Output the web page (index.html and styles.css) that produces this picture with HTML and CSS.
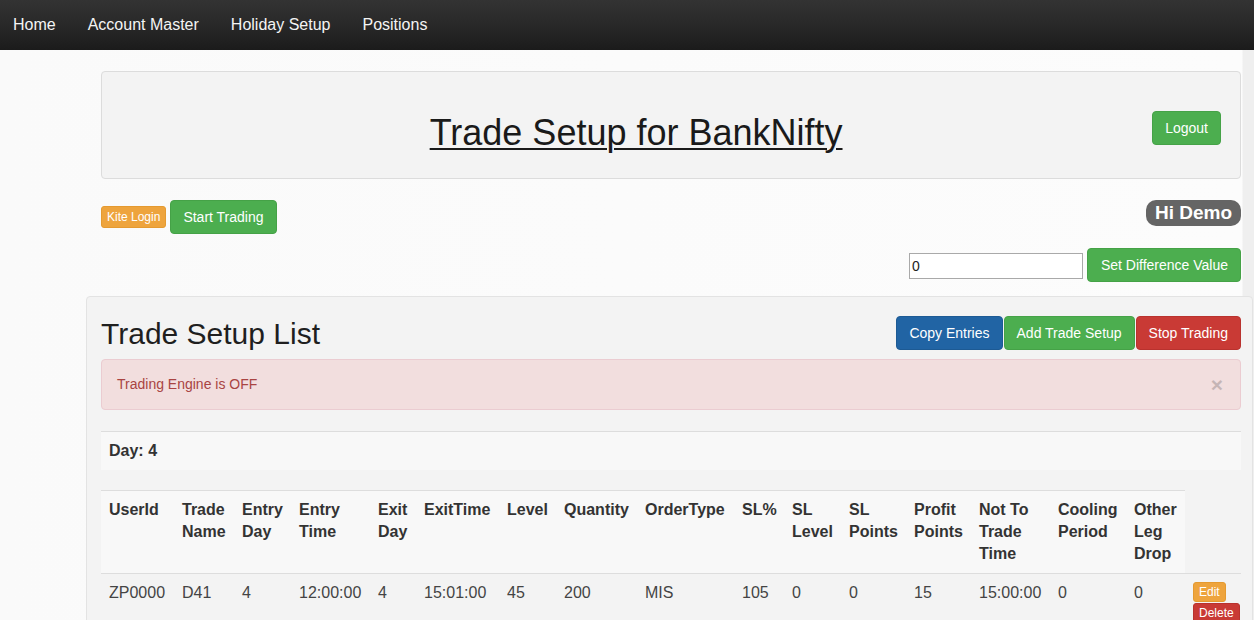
FILE: index.html
```html
<!DOCTYPE html>
<html>
<head>
<meta charset="utf-8">
<title>Trade Setup for BankNifty</title>
<link rel="stylesheet" href="styles.css">
</head>
<body>
<nav class="navbar">
  <a class="nav-link" href="#">Home</a>
  <a class="nav-link" href="#">Account Master</a>
  <a class="nav-link" href="#">Holiday Setup</a>
  <a class="nav-link" href="#">Positions</a>
</nav>
<div class="page">
  <div class="inner">
    <div class="jumbotron">
      <h1 class="title"><span class="title-text">Trade Setup for BankNifty</span></h1>
      <button class="btn btn-success logout">Logout</button>
    </div>
    <div class="toolbar">
      <div class="toolbar-left">
        <button class="btn btn-warning btn-xs">Kite Login</button>
        <button class="btn btn-success">Start Trading</button>
      </div>
      <span class="hi-badge">Hi Demo</span>
    </div>
    <div class="diff-row">
      <input class="diff-input" type="text" value="0">
      <button class="btn btn-success">Set Difference Value</button>
    </div>
  </div>
  <div class="panel">
    <div class="panel-head">
      <h2 class="panel-title">Trade Setup List</h2>
      <div class="btn-group">
        <button class="btn btn-primary">Copy Entries</button>
        <button class="btn btn-success">Add Trade Setup</button>
        <button class="btn btn-danger">Stop Trading</button>
      </div>
    </div>
    <div class="alert">
      <span>Trading Engine is OFF</span>
      <span class="close">&times;</span>
    </div>
    <table class="day-table">
      <tr><td>Day: 4</td></tr>
    </table>
    <table class="setup-table">
      <colgroup>
        <col class="c73"><col class="c60"><col class="c57"><col class="c79"><col class="c46"><col class="c83"><col class="c57"><col class="c81"><col class="c97"><col class="c50"><col class="c57"><col class="c65"><col class="c65"><col class="c79"><col class="c76"><col class="c59"><col class="c56">
      </colgroup>
      <tr class="head-row">
        <th>UserId</th>
        <th>Trade Name</th>
        <th>Entry Day</th>
        <th>Entry Time</th>
        <th>Exit Day</th>
        <th>ExitTime</th>
        <th>Level</th>
        <th>Quantity</th>
        <th>OrderType</th>
        <th>SL%</th>
        <th>SL Level</th>
        <th>SL Points</th>
        <th>Profit Points</th>
        <th>Not To Trade Time</th>
        <th>Cooling Period</th>
        <th>Other Leg Drop</th>
      </tr>
      <tr class="data-row">
        <td>ZP0000</td>
        <td>D41</td>
        <td>4</td>
        <td>12:00:00</td>
        <td>4</td>
        <td>15:01:00</td>
        <td>45</td>
        <td>200</td>
        <td>MIS</td>
        <td>105</td>
        <td>0</td>
        <td>0</td>
        <td>15</td>
        <td>15:00:00</td>
        <td>0</td>
        <td>0</td>
        <td class="actions">
          <div class="action-stack">
            <button class="btn btn-warning btn-xs btn-row">Edit</button>
            <button class="btn btn-danger btn-xs btn-row">Delete</button>
          </div>
        </td>
      </tr>
    </table>
  </div>
</div>
</body>
</html>
```

FILE: styles.css
```css
* {
  box-sizing: border-box;
}

html, body {
  margin: 0;
  padding: 0;
}

body {
  font-family: "Liberation Sans", Arial, sans-serif;
  font-size: 14px;
  line-height: 20px;
  color: #333;
  background: linear-gradient(to right, #fafafa 0, #fcfcfc 1242px, #efefef 1243px, #efefef 100%);
  overflow-x: hidden;
  min-height: 620px;
}

/* Navbar */
.navbar {
  height: 50px;
  display: flex;
  align-items: center;
  gap: 32px;
  padding-left: 13px;
  background: linear-gradient(to bottom, #333 0%, #262626 60%, #1b1b1b 100%);
}

.nav-link {
  color: #f4f4f4;
  text-decoration: none;
  font-size: 16px;
  line-height: 20px;
  margin-top: -1px;
}

/* Page */
.page {
  margin-left: 86px;
  width: 1167px;
  padding-top: 21px;
}

.inner {
  padding: 0 12px 0 15px;
}

.jumbotron {
  display: flex;
  align-items: flex-start;
  background: #f3f3f3;
  border: 1px solid #dcdcdc;
  border-radius: 4px;
  padding: 39px 19px 25px 31px;
}

.title {
  flex: 1;
  margin: 2px 0 0;
  text-align: center;
  font-size: 36px;
  line-height: 40px;
  font-weight: normal;
  color: #1a1a1a;
}

.title-text {
  text-decoration: underline;
  text-decoration-thickness: 2px;
  text-underline-offset: 3px;
}

.logout {
  margin-left: 13px;
}

/* Buttons */
.btn {
  font-family: "Liberation Sans", Arial, sans-serif;
  font-size: 14px;
  line-height: 20px;
  padding: 6px 12px;
  border: 1px solid transparent;
  border-radius: 4px;
  color: #fff;
  cursor: pointer;
  white-space: nowrap;
}

.btn-success {
  background: #4cae4f;
  border-color: #45a247;
}

.btn-primary {
  background: #2164a4;
  border-color: #1d5a94;
}

.btn-danger {
  background: #c93a35;
  border-color: #b9322e;
}

.btn-warning {
  background: #eea43d;
  border-color: #e59a30;
}

.btn-xs {
  font-size: 12px;
  line-height: 18px;
  padding: 1px 5px;
  border-radius: 3px;
}

/* Toolbar */
.toolbar {
  margin-top: 21px;
  display: flex;
  justify-content: space-between;
  align-items: flex-start;
}

.toolbar-left {
  display: flex;
  align-items: center;
  gap: 4px;
}

.hi-badge {
  background: #656565;
  color: #fff;
  font-weight: bold;
  font-size: 19px;
  line-height: 19px;
  padding: 3px 9px 4px;
  border-radius: 10px;
}

.diff-row {
  margin-top: 14px;
  display: flex;
  justify-content: flex-end;
  align-items: center;
  gap: 4px;
}

.diff-input {
  width: 174px;
  height: 26px;
  border: 1px solid #a9a9a9;
  background: #fff;
  font-family: "Liberation Sans", Arial, sans-serif;
  font-size: 14px;
  padding: 0 2px;
  color: #222;
  margin-top: 1px;
}

.diff-row .btn {
  padding: 6px 12px 6px 13px;
}

/* Panel */
.panel {
  margin-top: 14px;
  background: #f3f3f3;
  border: 1px solid #e3e3e3;
  border-radius: 4px;
  padding: 19px 11px 20px 14px;
}

.panel-head {
  display: flex;
  justify-content: space-between;
  align-items: center;
}

.panel-title {
  margin: 0;
  font-size: 30px;
  line-height: 33px;
  font-weight: normal;
  color: #1f1f1f;
}

.btn-group {
  display: flex;
  gap: 1px;
}

.alert {
  margin-top: 9px;
  margin-bottom: 21px;
  background: #f2dede;
  border: 1px solid #ebccd1;
  border-radius: 4px;
  color: #a94442;
  padding: 14px 17px 14px 15px;
  line-height: 21px;
  display: flex;
  justify-content: space-between;
  align-items: center;
}

.close {
  font-size: 21px;
  font-weight: bold;
  color: #000;
  opacity: 0.18;
  line-height: 20px;
}

/* Tables */
.day-table,
.setup-table {
  width: 1140px;
  border-collapse: collapse;
  border-spacing: 0;
  font-size: 16px;
  line-height: 22px;
}

.day-table {
  border-top: 1px solid #dddddd;
  margin-bottom: 20px;
}

.day-table td {
  background: #f8f8f8;
  padding: 8px;
  font-weight: bold;
  color: #333;
}

.setup-table {
  table-layout: fixed;
}

.setup-table th,
.setup-table td {
  padding: 8px;
  text-align: left;
  vertical-align: top;
}

.head-row th {
  font-weight: bold;
  background: #f8f8f8;
  border-top: 1px solid #dddddd;
  color: #333;
}

.data-row td {
  border-top: 1px solid #dddddd;
  color: #444;
}

.actions {
  overflow: visible;
  padding-top: 9px;
}

.action-stack {
  display: flex;
  flex-direction: column;
  align-items: flex-start;
  gap: 1px;
}

.btn-row {
  line-height: 16px;
  padding: 1px 5px;
}

.c73 { width: 73px; }
.c60 { width: 60px; }
.c57 { width: 57px; }
.c79 { width: 79px; }
.c46 { width: 46px; }
.c83 { width: 83px; }
.c81 { width: 81px; }
.c97 { width: 97px; }
.c50 { width: 50px; }
.c65 { width: 65px; }
.c76 { width: 76px; }
.c59 { width: 59px; }
.c56 { width: 56px; }
```
